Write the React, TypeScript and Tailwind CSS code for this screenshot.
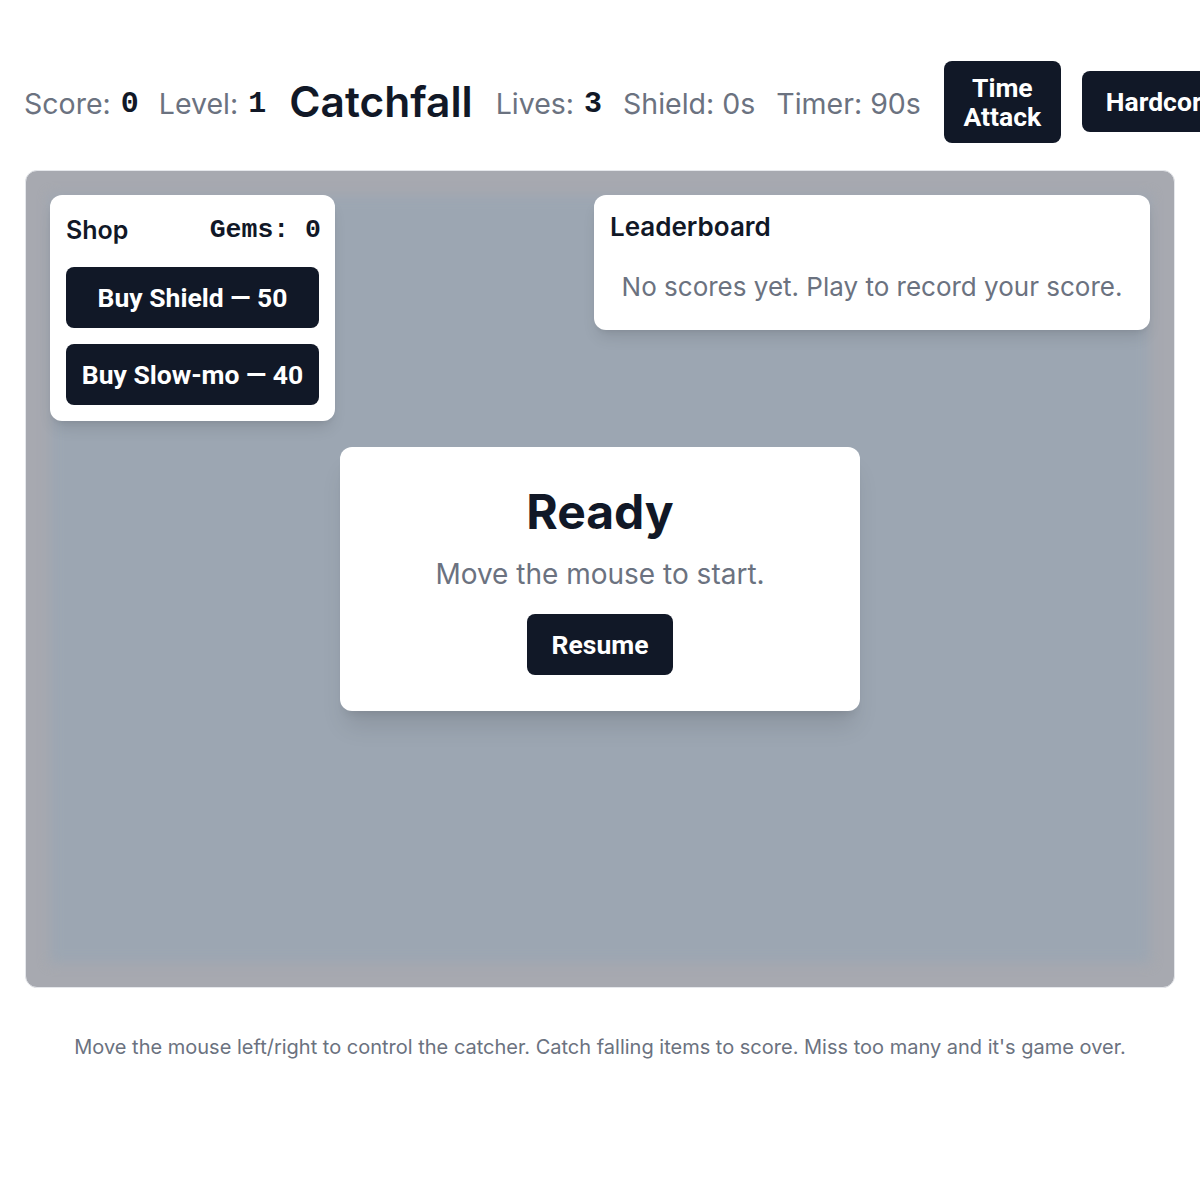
import React from "react";

function Stat({ label, value, cls = "" }: { label: string; value?: string; cls?: string }) {
  return (
    <div className={`flex items-center gap-2.5 shrink-0 pt-1.5 ${cls}`}>
      <span className="text-[28.5px] text-[#6b7280]">{label}</span>
      {value !== undefined && (
        <span className="font-['Liberation_Mono',monospace] font-bold text-[30px] text-[#111827]">{value}</span>
      )}
    </div>
  );
}

const btn =
  "rounded-lg bg-[#111827] text-[26.5px] leading-[29px] font-bold text-white font-['Roboto',sans-serif]";

export default function App() {
  return (
    <div className="w-[1200px] h-[1200px] overflow-hidden bg-white font-['Inter',sans-serif] text-[#111827]">
      <div className="flex items-center gap-5 pl-6 pt-[60px] whitespace-nowrap h-[143px]">
        <Stat label="Score:" value="0" />
        <Stat label="Level:" value="1" />
        <div className="text-[42.5px] font-semibold text-[#111827] mx-[3px] shrink-0">Catchfall</div>
        <Stat label="Lives:" value="3" />
        <Stat label="Shield: 0s" cls="ml-[1px]" />
        <Stat label="Timer: 90s" cls="ml-[1px]" />
        <button className={`shrink-0 ml-[3px] w-[117px] whitespace-normal py-3 ${btn}`}>Time Attack</button>
        <button className={`shrink-0 ml-[1px] px-6 py-4 ${btn}`}>Hardcore</button>
      </div>

      <div className="mx-[25px] mt-[27px] h-[818px] relative rounded-xl border border-[#e5e7eb] bg-[#a7a9b0] overflow-hidden">
        <div className="absolute inset-6 bg-[#9ca6b2] blur-[6px]" />

        <div className="absolute left-6 top-6 rounded-xl bg-white p-4 shadow-lg">
          <div className="flex items-center justify-between h-10 mb-4">
            <span className="text-[25px] font-semibold">Shop</span>
            <span className="font-['Liberation_Mono',monospace] font-bold text-[26.5px] -mr-0.5">Gems: 0</span>
          </div>
          <div className="flex flex-col gap-4">
            <button className={`w-[253px] py-4 ${btn}`}>Buy Shield — 50</button>
            <button className={`w-[253px] py-4 ${btn}`}>Buy Slow-mo — 40</button>
          </div>
        </div>

        <div className="absolute right-6 top-6 w-[556px] rounded-xl bg-white px-4 pt-4 pb-6 shadow-lg">
          <div className="text-[26px] leading-8 font-semibold">Leaderboard</div>
          <div className="mt-6 text-center text-[26px] leading-[39px] text-[#6b7280]">
            No scores yet. Play to record your score.
          </div>
        </div>

        <div className="absolute left-1/2 top-1/2 -translate-x-1/2 -translate-y-1/2 w-[520px] rounded-xl bg-white p-9 shadow-xl flex flex-col items-center">
          <div className="text-[48px] font-bold leading-[58px]">Ready</div>
          <div className="mt-[13px] text-[28px] leading-[40px] text-[#6b7280]">Move the mouse to start.</div>
          <button className={`mt-5 px-6 py-4 ${btn}`}>Resume</button>
        </div>
      </div>

      <p className="mt-[45px] text-center text-[20px] leading-7 text-[#6b7280]">
        Move the mouse left/right to control the catcher. Catch falling items to score. Miss too many and it's game over.
      </p>
    </div>
  );
}
